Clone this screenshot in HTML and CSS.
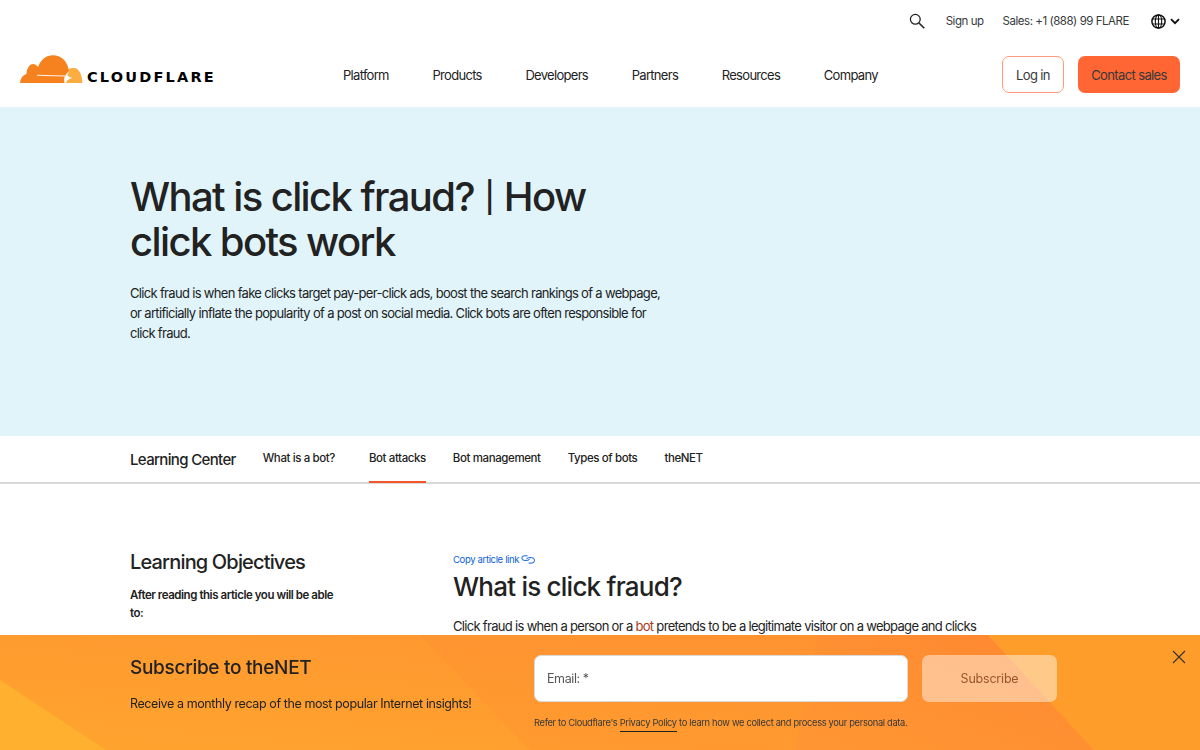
FILE: index.html
```html
<!DOCTYPE html>
<html lang="en">
<head>
    <meta charset="UTF-8">
    <meta name="viewport" content="width=device-width, initial-scale=1.0">
    <title>What is click fraud? | How click bots work</title>
    <link rel="stylesheet" href="styles.css">
</head>
<body>
    <header class="site-header">
        <div class="top-bar">
            <svg class="icon-search" width="16" height="16" viewBox="0 0 16 16" fill="none" stroke="#222" stroke-width="1.3"><circle cx="6.3" cy="6.3" r="4.9"/><path d="M10 10l5.3 5.3" stroke-width="1.6"/></svg>
            <a class="top-link top-signup">Sign up</a>
            <a class="top-link top-sales">Sales: +1 (888) 99 FLARE</a>
            <div class="lang">
                <svg width="15" height="15" viewBox="0 0 15 15" fill="none" stroke="#111" stroke-width="1.1"><circle cx="7.5" cy="7.5" r="6.6" fill="#fff" stroke-width="1.5"/><ellipse cx="7.5" cy="7.5" rx="3.2" ry="6.7"/><path d="M7.5 1v13M1 5h13M1 10h13"/></svg>
                <svg width="10" height="7" viewBox="0 0 10 7" fill="none" stroke="#111" stroke-width="1.9"><path d="M1 1.2l4 4 4-4"/></svg>
            </div>
        </div>
        <div class="main-bar">
            <a class="logo">
                <svg width="63" height="29" viewBox="0 0 63 29"><path fill="#f6821f" d="M0 28C0.5 23 3 20 6.5 19C6.5 13 10 9 13 9C15 9 16.5 10 18 12C20.5 5 26 0.3 33 0.3C41 0.3 47 6 48.5 14L50 15.5C46.5 18 44.8 21 44 24L44.5 28Z"/><path fill="#fbad41" d="M48.5 14C50 13.3 52 13 54 13C59 13 62.5 20 62.3 28H46C46.5 25.5 48.5 24 52.5 23C49 22 47.5 21.2 47.5 20C47.8 18.5 49.5 16.5 48.5 14Z"/><path fill="none" stroke="#fff" stroke-width="0.9" d="M17 20.3L45 21"/></svg>
                <span class="logo-text">CLOUDFLARE</span>
            </a>
            <nav class="main-nav">
                <a>Platform</a>
                <a>Products</a>
                <a>Developers</a>
                <a>Partners</a>
                <a>Resources</a>
                <a>Company</a>
            </nav>
            <div class="header-btns">
                <a class="btn btn-login">Log in</a>
                <a class="btn btn-contact">Contact sales</a>
            </div>
        </div>
    </header>

    <section class="hero">
        <h1>What is click fraud? <span class="pipe">|</span> How click bots work</h1>
        <p>Click fraud is when fake clicks target pay-per-click ads, boost the search rankings of a webpage, or artificially inflate the popularity of a post on social media. Click bots are often responsible for click fraud.</p>
    </section>

    <nav class="sub-nav">
        <span class="sub-title">Learning Center</span>
        <a class="sub-first">What is a bot?</a>
        <a class="active">Bot attacks</a>
        <a>Bot management</a>
        <a>Types of bots</a>
        <a>theNET</a>
    </nav>

    <main class="article-wrap">
        <aside class="objectives">
            <h2>Learning Objectives</h2>
            <p>After reading this article you will be able to:</p>
        </aside>
        <article class="article">
            <a class="copy-link">Copy article link
                <svg width="14" height="9" viewBox="0 0 14 9" fill="none" stroke="#0a5fd6" stroke-width="1"><path d="M6.5 0.8H3.2a2.3 2.3 0 0 0 0 4.6H6.6a1.6 1.6 0 0 0 1.6-1.5"/><path d="M5.8 4.2a1.6 1.6 0 0 1 1.6-1.5h3.4a2.6 2.6 0 0 1 0 5.4H7.6"/></svg>
            </a>
            <h2>What is click fraud?</h2>
            <p>Click fraud is when a person or a <a class="red-link">bot</a> pretends to be a legitimate visitor on a webpage and clicks</p>
        </article>
    </main>

    <div class="subscribe-banner">
        <svg class="banner-bg" width="1200" height="115" viewBox="0 0 1200 115">
            <defs>
                <linearGradient id="bgLeft" x1="0" y1="1" x2="1" y2="0"><stop offset="0" stop-color="#ffa42e"/><stop offset="0.6" stop-color="#ff9a30"/><stop offset="1" stop-color="#ff9232"/></linearGradient>
                <linearGradient id="bgMid" x1="1" y1="0" x2="0" y2="1"><stop offset="0" stop-color="#ff8530"/><stop offset="0.5" stop-color="#ff9032"/><stop offset="1" stop-color="#ff9633"/></linearGradient>
            </defs>
            <path fill="url(#bgLeft)" d="M0 0H1200V115H0Z"/>
            <path fill="#ffb02f" d="M0 45L106 115H0Z"/>
            <path fill="#ff9032" opacity="0.35" d="M420 0H820L795 115H530Z"/>
            <path fill="url(#bgMid)" d="M818 0H988L1094 115H795Z"/>
            <path fill="#ff9d2b" d="M988 0H1200V115H1094Z"/>
        </svg>
        <div class="banner-left">
            <h3>Subscribe to theNET</h3>
            <p>Receive a monthly recap of the most popular Internet insights!</p>
        </div>
        <form class="banner-form">
            <div class="form-row">
                <input class="email-input" type="text" placeholder="Email: *">
                <button class="sub-btn" type="button">Subscribe</button>
            </div>
            <p class="form-note">Refer to Cloudflare's <a>Privacy Policy</a> to learn how we collect and process your personal data.</p>
        </form>
        <svg class="banner-close" width="14" height="14" viewBox="0 0 14 14" fill="none" stroke="#333" stroke-width="1.1"><path d="M1 1l12 12M13 1L1 13"/></svg>
    </div>
</body>
</html>
```
FILE: styles.css
```css
* {
    box-sizing: border-box;
}

html, body {
    height: 750px;
    overflow: hidden;
}

body {
    margin: 0;
    font-family: Inter, "Liberation Sans", sans-serif;
    color: #222;
    background: #fff;
}

h1, h2, h3, p {
    margin: 0;
}

.top-bar {
    height: 42px;
    display: flex;
    justify-content: flex-end;
    align-items: center;
    padding-right: 20px;
    font-size: 11.5px;
    letter-spacing: -0.46px;
}

.icon-search {
    margin-right: 21px;
}

.top-link {
    color: #36393a;
}

.top-signup {
    margin-right: 19px;
}

.top-sales {
    margin-right: 22px;
}

.lang {
    display: flex;
    align-items: center;
    gap: 4px;
}

.main-bar {
    height: 65px;
    display: flex;
    align-items: center;
    padding: 0 20px;
}

.logo {
    display: flex;
    align-items: flex-end;
    width: 323px;
    height: 29px;
    margin-top: -10px;
}

.logo-text {
    font-family: "DejaVu Sans", sans-serif;
    font-weight: 700;
    font-size: 14.5px;
    letter-spacing: 2.2px;
    color: #000;
    line-height: 11px;
    margin-left: 4px;
    margin-bottom: 1px;
}

.main-nav {
    display: flex;
    gap: 43.7px;
    font-size: 13px;
    letter-spacing: -0.7px;
    color: #222;
}

.header-btns {
    margin-left: auto;
    display: flex;
    gap: 14px;
}

.btn {
    height: 37px;
    display: flex;
    align-items: center;
    justify-content: center;
    border-radius: 7px;
    font-size: 13px;
    letter-spacing: -0.62px;
    color: #36393a;
}

.btn-login {
    width: 62px;
    border: 1px solid #ff9b7c;
    background: #fff;
}

.btn-contact {
    width: 102px;
    background: #ff6633;
}

.hero {
    height: 329px;
    background: #e0f4fa;
    padding: 67px 130px 0;
}

.hero h1 {
    font-size: 40px;
    line-height: 45px;
    font-weight: 500;
    letter-spacing: -1.6px;
    width: 500px;
    color: #222;
}

.pipe {
    font-size: 30px;
    line-height: 0;
    padding: 0 1.5px;
    vertical-align: 3px;
}

.hero p {
    width: 535px;
    margin-top: 19px;
    font-size: 13px;
    line-height: 20px;
    letter-spacing: -0.68px;
    color: #222;
}

.sub-nav {
    height: 48px;
    display: flex;
    align-items: stretch;
    padding-left: 130px;
    border-bottom: 2px solid #d9d9d9;
    font-size: 11.5px;
    font-weight: 500;
    letter-spacing: -0.4px;
    gap: 27px;
}

.sub-nav a {
    display: flex;
    align-items: center;
    padding-bottom: 2px;
    margin-bottom: -1px;
    border-bottom: 2px solid transparent;
}

.sub-nav a.active {
    border-bottom-color: #f6552a;
}

.sub-nav a.sub-first {
    margin-right: 7px;
}

.sub-title {
    display: flex;
    align-items: center;
    font-size: 15px;
    font-weight: 500;
    letter-spacing: -0.65px;
    margin-top: 1px;
}

.article-wrap {
    display: flex;
    padding: 68px 0 0 130px;
}

.objectives {
    width: 323px;
}

.objectives h2 {
    font-size: 20px;
    line-height: 24px;
    font-weight: 500;
    letter-spacing: -0.84px;
    margin-top: -2px;
}

.objectives p {
    width: 215px;
    margin-top: 12px;
    font-size: 11.5px;
    font-weight: 600;
    line-height: 18px;
    letter-spacing: -0.45px;
}

.article {
    width: 600px;
}

.copy-link {
    display: flex;
    align-items: center;
    gap: 2px;
    font-size: 9.5px;
    letter-spacing: -0.35px;
    color: #0a5fd6;
    height: 14px;
}

.article h2 {
    margin-top: 6px;
    font-size: 26px;
    line-height: 30px;
    font-weight: 500;
    letter-spacing: -0.77px;
}

.article p {
    margin-top: 14px;
    font-size: 13px;
    line-height: 20px;
    letter-spacing: -0.69px;
}

.red-link {
    color: #a93a1b;
}

.subscribe-banner {
    position: fixed;
    left: 0;
    right: 0;
    bottom: 0;
    height: 115px;
    display: flex;
    padding-left: 130px;
    overflow: hidden;
}

.banner-bg {
    position: absolute;
    left: 0;
    top: 0;
}

.banner-left, .banner-form {
    position: relative;
}

.banner-left {
    width: 404px;
    padding-top: 21px;
}

.banner-left h3 {
    font-size: 19px;
    line-height: 24px;
    font-weight: 500;
    letter-spacing: -0.3px;
}

.banner-left p {
    margin-top: 14px;
    font-size: 12.5px;
    line-height: 20px;
    letter-spacing: -0.4px;
}

.banner-form {
    padding-top: 20px;
}

.form-row {
    display: flex;
    gap: 14px;
}

.email-input {
    width: 374px;
    height: 47px;
    padding: 0 12px;
    border: 1px solid #d9d9d9;
    border-radius: 7px;
    background: #fff;
    font: 12.5px Inter, "Liberation Sans", sans-serif;
    letter-spacing: -0.4px;
}

.email-input::placeholder {
    color: #555;
}

.sub-btn {
    width: 135px;
    height: 47px;
    border: none;
    border-radius: 7px;
    background: rgba(255, 255, 255, 0.45);
    color: #99562f;
    font: 12.5px Inter, "Liberation Sans", sans-serif;
    letter-spacing: -0.2px;
}

.form-note {
    margin-top: 14px;
    font-size: 9.3px;
    line-height: 14px;
    letter-spacing: -0.32px;
    color: #36393a;
}

.form-note a {
    display: inline-block;
    border-bottom: 1px solid #222;
    padding-bottom: 2px;
    line-height: 12px;
}

.banner-close {
    position: absolute;
    top: 15px;
    right: 14px;
}
```
